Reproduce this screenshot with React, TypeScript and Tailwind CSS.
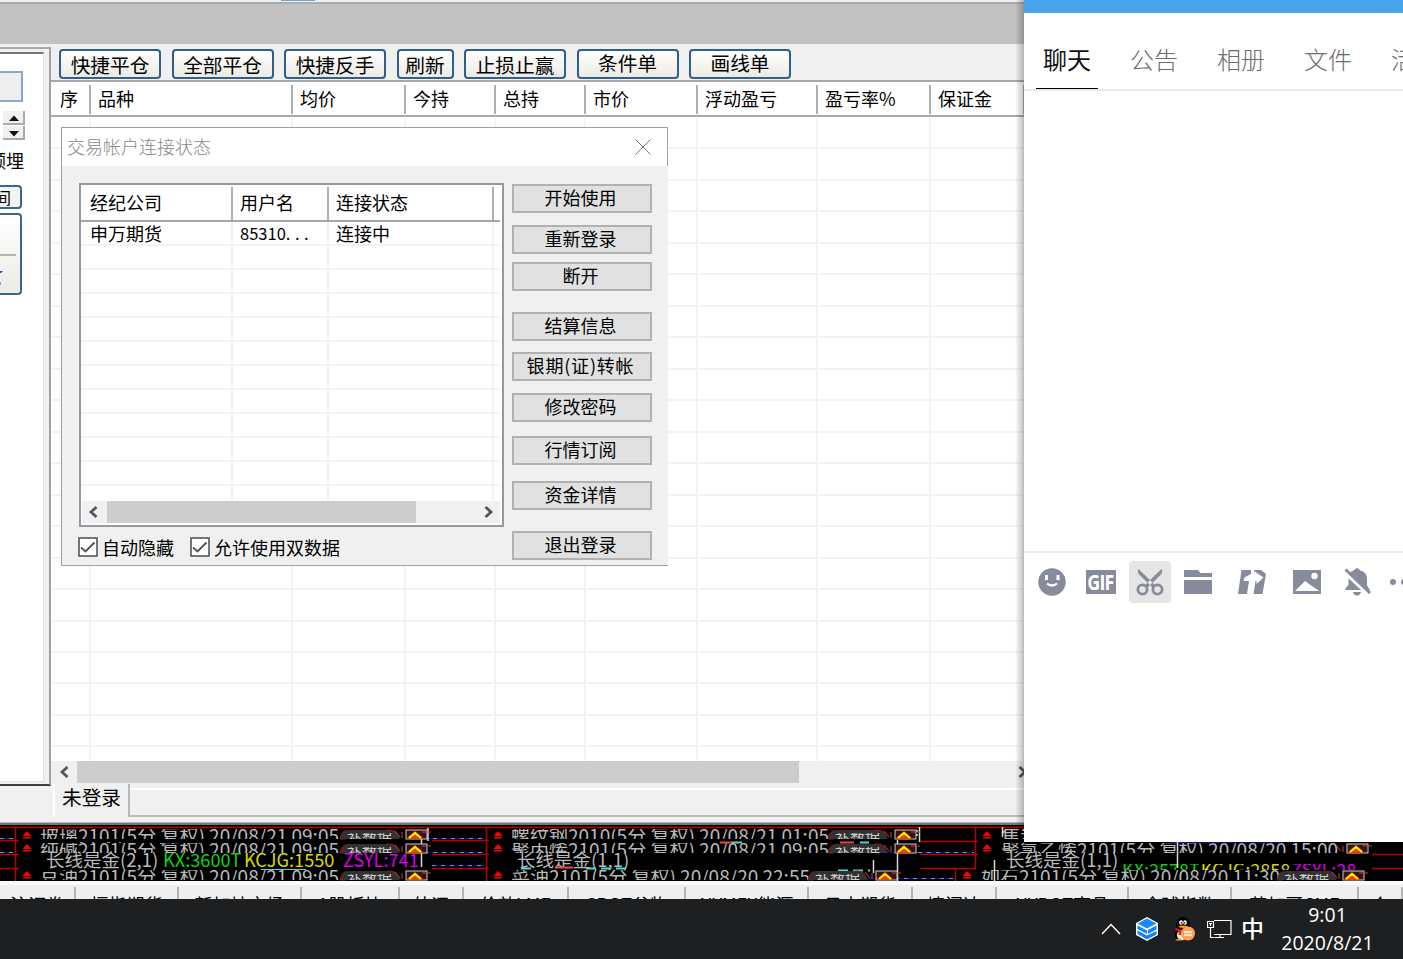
import clsx from 'clsx';

/** Futures trading client with the account dialog, a docked chat window and the system taskbar. */

const TOOLBAR = [
  { label: '快捷平仓' },
  { label: '全部平仓' },
  { label: '快捷反手' },
  { label: '刷新', narrow: true },
  { label: '止损止赢' },
  { label: '条件单', raised: true },
  { label: '画线单', raised: true },
];

const COLUMNS = [
  { label: '序', width: 'w-[40px]' },
  { label: '品种', width: 'w-[202px]' },
  { label: '均价', width: 'w-[113px]' },
  { label: '今持', width: 'w-[90px]' },
  { label: '总持', width: 'w-[90px]' },
  { label: '市价', width: 'w-[112px]' },
  { label: '浮动盈亏', width: 'w-[120px]' },
  { label: '盈亏率%', width: 'w-[113px]' },
  { label: '保证金', width: 'w-[94px]' },
];

const LIST_COLUMNS = [
  { label: '经纪公司', value: '申万期货', width: 'w-[152px]' },
  { label: '用户名', value: '85310...', width: 'w-[96px]' },
  { label: '连接状态', value: '连接中', width: 'w-[165px]' },
];

const ACTIONS = [
  { label: '开始使用', margin: 'mt-[17.500px]' },
  { label: '重新登录', margin: 'mt-3' },
  { label: '断开', margin: 'mt-[8.500px]' },
  { label: '结算信息', margin: 'mt-[20.500px]' },
  { label: '银期(证)转帐', margin: 'mt-[11.500px]' },
  { label: '修改密码', margin: 'mt-[11.500px]' },
  { label: '行情订阅', margin: 'mt-[14.500px]' },
  { label: '资金详情', margin: 'mt-4' },
  { label: '退出登录', margin: 'mt-[20.500px]' },
];

const MARKETS = [
  { label: '沪证券', width: 'w-[76px]' },
  { label: '恒指期货', width: 'w-[103px]' },
  { label: '新加坡市场', width: 'w-[123px]' },
  { label: 'A股板块', width: 'w-[98px]' },
  { label: '外汇', width: 'w-[64px]' },
  { label: '伦敦LME', width: 'w-[105px]' },
  { label: 'CBOT谷物', width: 'w-[117px]' },
  { label: 'NYMEX能源', width: 'w-[123px]' },
  { label: '日本期货', width: 'w-[104px]' },
  { label: '情阅达', width: 'w-[84px]' },
  { label: 'NYBOT商品', width: 'w-[132px]' },
  { label: '全球指数', width: 'w-[103px]' },
  { label: '芝加哥CME', width: 'w-[127px]' },
  { label: '合', width: 'w-[44px]' },
];

function Chevron({ dir }: { dir: 'left' | 'right' }) {
  return (
    <svg width="10" height="12" viewBox="0 0 10 12" className={clsx('shrink-0', dir === 'right' && 'rotate-180')}>
      <path d="M8.500 1 3 6l5.500 5" fill="none" stroke="#555" strokeWidth="2.800" />
    </svg>
  );
}

function SidePanel() {
  return (
    <div className="flex h-[739px] w-[51px] shrink-0 flex-col border-t-2 border-r-2 border-b-2 border-t-[#a8a8a8] border-r-[#a0a0a0] border-b-[#3c3c3c] bg-[#f0f0f0]">
      <div className="mt-[3px] mr-[5px] mb-[2px] flex flex-1 flex-col items-start overflow-hidden border-t-2 border-r border-b border-t-[#777] border-r-[#dedede] border-b-[#dedede] bg-white">
        <div className="mt-[17px] h-[31px] w-[23px] border-2 border-l-0 border-[#88a9c8] bg-[#efefef]" />
        <div className="mt-[9px] ml-[3px] flex flex-col gap-[1px]">
          {['M11 4.500l5 5.500H6z', 'M11 10.500l5-5.500H6z'].map((d) => (
            <div key={d} className="h-[14px] w-[22px] border-r-2 border-b-2 border-[#aaa] bg-[#f0f0f0]">
              <svg width="20" height="12" viewBox="0 0 20 12">
                <path d={d} fill="#111" />
              </svg>
            </div>
          ))}
        </div>
        <div className="mt-[9px] -ml-[12px] h-[22px] text-lg leading-[22px] whitespace-nowrap">顾埋</div>
        <div className="mt-[14px] flex h-[24px] w-[22px] items-center overflow-hidden rounded-r border-2 border-l-0 border-[#39658f] bg-[#f4f4f2] text-base leading-none">
          <span className="-ml-[5px]">间</span>
        </div>
        <div className="mt-[4px] h-[82px] w-[22px] rounded-r border-2 border-l-0 border-[#39658f] bg-linear-to-b from-white to-[#ecebe6]">
          <div className="mt-[39px] mr-[4px] h-[2px] bg-[#b5b5b5]" />
          <svg width="5" height="18" viewBox="0 0 5 18" className="mt-[14px]">
            <path d="M0 1h3L1 3H0z" fill="#2447e8" />
            <path d="M0 12h1v3H0z" fill="#61b5ef" />
          </svg>
        </div>
      </div>
    </div>
  );
}

function Positions() {
  return (
    <div className="flex w-[973px] flex-col overflow-hidden">
      <div className="flex h-9 shrink-0 gap-[10.500px] pt-[4.500px] pl-2 text-[19.700px]">
        {TOOLBAR.map((b) => (
          <div
            key={b.label}
            className={clsx(
              'flex h-[30px] shrink-0 justify-center rounded border-2 border-[#315f8b] bg-linear-to-b from-white to-[#eceae4] leading-[27px]',
              b.narrow ? 'w-[57px]' : 'w-[102px]',
            )}
          >
            <span className={clsx(b.raised && '-mt-[2px]')}>{b.label}</span>
          </div>
        ))}
      </div>
      <div className="flex h-[37px] shrink-0 border-t-2 border-b-2 border-[#a8a8a8] bg-white pt-[3px] pb-px text-lg leading-[27px]">
        {COLUMNS.map((c, i) => (
          <div
            key={c.label}
            className={clsx(
              'shrink-0 border-r-2 border-[#b0b0b0] whitespace-nowrap',
              c.width,
              i === 0 ? 'pl-[9px]' : 'pl-[7px]',
            )}
          >
            {c.label}
          </div>
        ))}
      </div>
      <div className="h-[644px] shrink-0 overflow-hidden bg-white pt-px">
        {Array.from({ length: 21 }, (_, i) => (
          <div key={i} className="flex h-[31.470px] border-b-2 border-[#f3f3f3]">
            {COLUMNS.map((c) => (
              <div key={c.label} className={clsx('shrink-0 border-r-2 border-[#f3f3f3]', c.width)} />
            ))}
          </div>
        ))}
      </div>
      <div className="flex h-[22px] shrink-0 items-center bg-[#f0f0f0] pl-[8px]">
        <Chevron dir="left" />
        <div className="ml-[8px] h-[22px] w-[722px] shrink-0 bg-[#cdcdcd]" />
        <div className="ml-[219px] shrink-0">
          <Chevron dir="right" />
        </div>
      </div>
      <div className="flex h-[39px] shrink-0 pt-px">
        <div className="ml-[2px] h-[33px] w-[77px] border-r-2 border-l-2 border-l-white border-r-[#b7b7b7] pl-[7px] text-[19.700px] leading-[26px]">
          未登录
        </div>
        <div className="mt-[4px] h-[29px] flex-1 border-t-2 border-b-2 border-t-white border-b-[#bcbcbc]" />
      </div>
    </div>
  );
}

function Dialog() {
  return (
    <div className="absolute top-[127px] left-[61px] h-[439px] w-[607px] border-t border-b border-l border-[#a0a0a0] bg-[#f0f0f0]">
      <div className="flex h-[38px] items-center justify-between border-r border-[#a0a0a0] bg-white pr-[16px] pl-[5px] text-lg font-light text-[#888]">
        <span className="-mt-[2px]">交易帐户连接状态</span>
        <svg width="16" height="16" viewBox="0 0 16 16">
          <path d="M.5.5l15 15M15.500.5l-15 15" stroke="#777" strokeWidth="1" />
        </svg>
      </div>
      <div className="flex">
        <div>
          <div className="mt-[17px] ml-[17px] flex h-[344px] w-[425px] flex-col border-2 border-[#9299a2] bg-white pt-[2px] pr-[2px] pb-[2px]">
            <div className="flex h-[35px] border-b-2 border-[#a6a6a6] text-lg leading-[30px]">
              {LIST_COLUMNS.map((c, i) => (
                <div
                  key={c.label}
                  className={clsx('border-r-2 border-[#b0b0b0]', c.width, i === 0 ? 'pl-[9px]' : 'pl-[7px]')}
                >
                  {c.label}
                </div>
              ))}
            </div>
            <div className="h-[279px] overflow-hidden text-lg leading-[23px]">
              {Array.from({ length: 12 }, (_, row) => (
                <div key={row} className="flex h-[24px] border-b-2 border-[#f3f3f3]">
                  {LIST_COLUMNS.map((c, i) => (
                    <div
                      key={c.label}
                      className={clsx(
                        'border-r-2 border-[#f3f3f3]',
                        c.width,
                        i === 0 ? 'pl-[9px]' : 'pl-[7px]',
                        i === 1 && 'text-[16.500px]',
                      )}
                    >
                      {row === 0 && (i === 1 ? <>85310<span className="tracking-[4.500px]">...</span></> : c.value)}
                    </div>
                  ))}
                </div>
              ))}
            </div>
            <div className="ml-px flex h-[22px] items-center bg-[#f0f0f0] pl-[6px]">
              <Chevron dir="left" />
              <div className="ml-[9px] h-full w-[309px] bg-[#cdcdcd]" />
              <div className="ml-[68px]">
                <Chevron dir="right" />
              </div>
            </div>
          </div>
          <div className="mt-[7px] ml-[16px] flex text-lg leading-[25px]">
            {['自动隐藏', '允许使用双数据'].map((label) => (
              <label key={label} className="mr-[16px] flex items-center gap-[4px]">
                <svg width="20" height="20" viewBox="0 0 20 20">
                  <rect x="1" y="1" width="18" height="18" fill="#fff" stroke="#4b4b4b" strokeWidth="1.500" />
                  <path d="M3 10.500l4.500 4L16.500 5.500" fill="none" stroke="#555" strokeWidth="2" />
                </svg>
                <span className="mt-px">{label}</span>
              </label>
            ))}
          </div>
        </div>
        <div className="ml-[8px] flex w-[140px] flex-col">
          {ACTIONS.map((a) => (
            <button
              key={a.label}
              className={clsx(
                'flex h-[29px] shrink-0 justify-center border-2 border-[#b1b1b1] bg-[#e1e1e1] pr-[3px] text-lg leading-[23px]',
                a.margin,
              )}
            >
              {a.label === '银期(证)转帐' ? <span className="tracking-[0.800px]">{a.label}</span> : a.label}
            </button>
          ))}
        </div>
      </div>
    </div>
  );
}

const QUOTES = [
  { text: '玻璃2101(5分 复权) 20/08/21 09:05', pos: 'left-[40px] top-[4px]' },
  { text: '纯碱2101(5分 复权) 20/08/21 09:05', pos: 'left-[40px] top-[18px]' },
  { text: '豆油2101(5分 复权) 20/08/21 09:05', pos: 'left-[40px] top-[45px]' },
  { text: '螺纹钢2010(5分 复权) 20/08/21 01:05', pos: 'left-[511px] top-[4px]' },
  { text: '聚丙烯2101(5分 复权) 20/08/21 09:05', pos: 'left-[511px] top-[18px]' },
  { text: '菜油2101(5分 复权) 20/08/20 22:55', pos: 'left-[511px] top-[45px]' },
  { text: '焦炭2101(5分 复权) 20/08/21 09:05', pos: 'left-[1001px] top-[4px]' },
  { text: '聚氯乙烯2101(5分 复权) 20/08/20 15:00', pos: 'left-[1001px] top-[18px]' },
  { text: '如石2101(5分 复权) 20/08/20 11:30', pos: 'left-[981px] top-[45px]' },
];

const FLAGS = [
  [415, 4], [415, 18], [415, 45], [904, 4], [904, 18], [885, 45], [1356, 18], [1352, 45],
];

const MARKS = [
  [27, 8], [27, 21], [27, 48], [498, 8], [498, 21], [498, 48], [987, 8], [987, 21], [967, 48],
];

const PILLS = [
  [340, 4], [340, 18], [340, 45], [828, 4], [828, 18], [808, 45], [1277, 45],
];

function QuoteStrip() {
  return (
    <div className="relative h-[56px] shrink-0 overflow-hidden bg-black text-[19px] leading-[19px] whitespace-nowrap text-[#b9b9b9]">
      {QUOTES.map((q) => (
        <div key={q.text} className={clsx('absolute h-[10px] overflow-hidden', q.pos)}>
          <div className="-mt-[4px]">{q.text}</div>
        </div>
      ))}
      <span className="absolute top-[25px] left-[46px] text-[18.500px]">长线是金(2,1)</span>
      <span className="absolute top-[25px] left-[163px] text-[18.200px] text-[#12cf12]">KX:3600T</span>
      <span className="absolute top-[25px] left-[244px] text-[18.200px] text-[#d8d800]">KCJG:1550</span>
      <span className="absolute top-[25px] left-[343px] text-[18.200px] text-[#dc00e6]">ZSYL:741</span>
      <span className="absolute top-[25px] left-[517px] text-[18.500px]">长线是金(1,1)</span>
      <span className="absolute top-[25px] left-[1006px] text-[18.500px]">长线是金(1,1)</span>
      <div className="absolute top-[39px] left-[1122px] flex h-[6px] gap-px overflow-hidden text-[18px]">
        <span className="-mt-[4px] text-[#12cf12]">KX:2578T</span>
        <span className="-mt-[4px] text-[#d8d800]">KCJG:2858</span>
        <span className="-mt-[4px] text-[#dc00e6]">ZSYL:28</span>
      </div>
      <svg width="1403" height="56" className="absolute top-0 left-0">
        <g stroke="#b90000" strokeWidth="1.500">
          <path d="M0 2.500h1024M15.500 2v54M0 15.500h19M0 29.500h19M0 43.500h19" />
          <path d="M486.500 2v54M432 15.500h57M432 29.500h57M432 43.500h57" fill="none" />
          <path d="M975.500 3v40.500M920 16.500h58M920 29.500h58M920 43.500h56M955.500 44v12M1372 29.500h31M1372 43.500h31" fill="none" />
        </g>
        <path d="M0 13.500h14M0 27.500h14M424 13.500h61M424 27.500h61M432 40.500h53M870 27.500h104M860 53.500h95M1170 17.500h112" stroke="#10107c" strokeWidth="1.500" />
        <path d="M0 13.500h14M0 27.500h14M424 13.500h61M424 27.500h61M432 40.500h53M900 27.500h74M895 53.500h60" stroke="#8888a8" strokeDasharray="4 5" />
        <path d="M80 17.500h52m28 1h75" stroke="#4ca6a6" strokeDasharray="3 9 2 13" />
        <g stroke="#4dd" strokeWidth="2">
          <path d="M521 43.500h12M586 43.500h42M732 17.500h10M860 17.500h9M838 45.500h32" strokeDasharray="10 5" />
          <path d="M555 42.500h18M720 17.500h12M840 17.500h14" stroke="#e44" />
          <path d="M261 44.500h45" strokeWidth="1" />
          <path d="M906 6h12M906 10h12" />
        </g>
        <path d="M421.500 14v28M428 3v13M897.500 15v41M873.500 35v13M919.500 2v15M994.500 35v21M1177.500 17v26M1002.500 2v10" stroke="#d7d7d7" strokeWidth="1.500" />
        {MARKS.map(([x, y]) => (
          <g key={`${x}-${y}`} fill="#f00">
            <path d={`M${x} ${y - 2}l4.500 5h-9z`} />
            <rect x={x - 4} y={y + 4} width="8" height="1.500" />
          </g>
        ))}
        {PILLS.map(([x, y]) => (
          <path
            key={`${x}-${y}`}
            d={`M${x} ${y + 10}q2-9 8-9h42q7 0 10 9z`}
            fill="#323232"
            stroke="#9a1515"
            strokeDasharray="10 42 12 60"
          />
        ))}
        {FLAGS.map(([x, y]) => (
          <g key={`${x}-${y}`}>
            <rect x={x - 9} y={y + 1} width="21" height="9" fill="#381212" stroke="#ccc" />
            <path d={`M${x + 7} ${y + 3}h9M${x - 20} ${y + 2}l5 6M${x - 13} ${y + 9}v-6`} stroke="#c44" />
            <path d={`M${x - 9} ${y + 10}l9-8 9 8z`} fill="#f33b00" />
            <path d={`M${x - 6} ${y + 9}l6-5 6 5`} fill="none" stroke="#ff0" strokeWidth="2" />
          </g>
        ))}
      </svg>
      {PILLS.map(([x, y]) => (
        <div
          key={`${x}-${y}`}
          className="absolute h-[6px] overflow-hidden text-[15px] leading-[15px] text-[#ccc]"
          style={{ left: x + 7, top: y + 4 }}
        >
          <div className="-mt-[3px]">补数据</div>
        </div>
      ))}
    </div>
  );
}

function MarketTabs() {
  return (
    <div className="flex h-[18px] shrink-0 overflow-hidden border-t-4 border-[#fafafa] bg-[#efefef] pt-[2px] text-[18px] leading-[24px]">
      {MARKETS.map((m) => (
        <div key={m.label} className={clsx('shrink-0 border-r-2 border-[#b4b4b4] text-center whitespace-nowrap', m.width)}>
          <div className="mt-[5px]">{m.label}</div>
        </div>
      ))}
    </div>
  );
}

const CHAT_TABS = ['公告', '相册', '文件', '活动'];

function ChatWindow() {
  return (
    <div className="absolute top-0 left-[1024px] flex h-[842px] w-[379px] flex-col overflow-hidden bg-white">
      <div className="h-[13px] shrink-0 bg-[#4aa4ec]" />
      <div className="flex h-[78px] shrink-0 gap-[25px] border-b-2 border-[#ebebeb] pl-[12px] text-2xl">
        <div className="flex h-[76px] w-[62px] shrink-0 items-center justify-center border-b border-black pt-[16px] text-[#111]">
          聊天
        </div>
        {CHAT_TABS.map((tab) => (
          <div key={tab} className="flex h-[76px] w-[62px] shrink-0 items-center justify-center pt-[15px] font-light text-[#6c6c6c]">
            {tab}
          </div>
        ))}
      </div>
      <div className="h-[460px] shrink-0" />
      <div className="flex shrink-0 items-center border-t-2 border-[#ebebeb] pt-[8px] pl-[14px] text-[#888b9b]">
        <svg width="28" height="28" viewBox="0 0 28 28" className="shrink-0">
          <circle cx="14" cy="14" r="13.700" fill="currentColor" />
          <path d="M8.500 7v5M20 7v5" stroke="#fff" strokeWidth="3" />
          <path d="M9 15.500q5 4 10 0" fill="none" stroke="#fff" strokeWidth="2.200" />
        </svg>
        <div className="ml-[20px] flex h-[24px] w-[30px] shrink-0 items-center justify-center bg-current">
          <span className="mr-[2px] scale-x-85 font-['Open_Sans'] text-[21px] leading-none font-bold tracking-[-1px] text-white">
            GIF
          </span>
        </div>
        <div className="ml-[13px] flex size-[42px] shrink-0 items-center justify-center rounded-sm bg-[#e5e5e5]">
          <svg width="28" height="28" viewBox="0 0 28 28" className="shrink-0">
            <path d="M2.500 1 16 14l3.500 4-3 1.500L4 7.500Q.5 4 2.500 1zM25.500 1 12 14l-3.500 4 3 1.500L24 7.500q3.500-3.500 1.500-6.500z" fill="currentColor" />
            <circle cx="6.500" cy="21.500" r="4.600" fill="none" stroke="currentColor" strokeWidth="2.800" />
            <circle cx="21.500" cy="21.500" r="4.600" fill="none" stroke="currentColor" strokeWidth="2.800" />
            <circle cx="14" cy="14" r="1" fill="#e5e5e5" />
          </svg>
        </div>
        <svg width="28" height="24" viewBox="0 0 28 24" fill="currentColor" className="ml-[13px] shrink-0">
          <path d="M0 0h14l2.500 3H28v4H0zM0 10h28v14H0z" />
        </svg>
        {/* share arrow cut out of two slanted sheets */}
        <svg width="28" height="24" viewBox="0 0 28 24" fill="currentColor" className="ml-[26px] shrink-0">
          <path d="M3.500 0H13v4l-6.500 3.500L5.500 11H11L9 24H0z" />
          <path d="M16 0h7l5 4-3.500 20h-9L17.500 11h1v3l7-6.500L16 1z" />
        </svg>
        <svg width="28" height="24" viewBox="0 0 28 24" className="ml-[27px] shrink-0">
          <path d="M0 0h28v24H0z" fill="currentColor" />
          <path d="M2 21 12 11l5.500 4 9 6z" fill="#fff" />
          <circle cx="21.500" cy="6" r="3.200" fill="#fff" />
        </svg>
        <svg width="28" height="28" viewBox="0 0 28 28" fill="currentColor" className="ml-[23px] shrink-0">
          <path d="M1.500 22v-2l3-3v-7q0-6 5-7.500Q11 .5 13 0q2 .5 3.500 2.500 6 1.500 6.500 8v7l3 4.500zM9 24h8q-1 3.500-4 3.500T9 24z" />
          <path d="M0 4l24 22" stroke="#fff" strokeWidth="3.500" />
          <path d="M1.500 1.500l24.500 23.500" stroke="currentColor" strokeWidth="3" />
        </svg>
        <svg width="30" height="6" viewBox="0 0 30 6" fill="currentColor" className="ml-[18px] shrink-0">
          <circle cx="3" cy="3" r="3" />
          <circle cx="14" cy="3" r="3" />
          <circle cx="25" cy="3" r="3" />
        </svg>
      </div>
    </div>
  );
}

function Taskbar() {
  return (
    <div className="flex h-[60px] shrink-0 items-center bg-[#1e1f20] pl-[1101px] text-white">
      <svg width="20" height="12" viewBox="0 0 20 12" className="shrink-0">
        <path d="M1 11l9-9.500 9 9.500" fill="none" stroke="#fff" strokeWidth="1.400" />
      </svg>
      <svg width="22" height="24" viewBox="0 0 22 24" className="ml-[15px] shrink-0">
        <path d="M11 0l11 6v12l-11 6L0 18V6z" fill="#fff" />
        <path d="M11 1.500 20.500 6.500 11 11.500 1.500 6.500z" fill="#188cff" />
        <path d="M1.500 8.500 11 13.500v3.500l-9.500-5z" fill="#1283f5" />
        <path d="M1.500 13.500 11 18.500v4L1.500 17z" fill="#1283f5" />
        <path d="M20.500 8.500 12 13v4l8.500-4.500zM20.500 14 11 18.500v4l9.500-5z" fill="#1283f5" />
      </svg>
      <svg width="24" height="24" viewBox="0 0 24 24" className="ml-[15px] shrink-0">
        <path d="M3 11h13l2 9-5 3H4l-2-4z" fill="#050505" />
        <ellipse cx="10" cy="8" rx="7" ry="8" fill="#050505" />
        <ellipse cx="9.500" cy="18" rx="5.500" ry="5" fill="#fff" />
        <ellipse cx="8" cy="5.500" rx="1.800" ry="2.300" fill="#fff" />
        <ellipse cx="12" cy="5.500" rx="1.800" ry="2.300" fill="#fff" />
        <circle cx="8.400" cy="5.800" r=".8" />
        <circle cx="11.600" cy="5.800" r=".8" />
        <path d="M5 9.500q5-2 10 0-5 3-10 0z" fill="#f90" />
        <path d="M3 11q7 4 14 0l1 3q-5 1-9 .5V18H5.500v-4L2 13z" fill="#ed1c2e" />
        <path d="M2 23.500q4-4 8 0z" fill="#f90" />
        <circle cx="15" cy="16.500" r="7" fill="#ffa24f" />
        <path d="M11 15h8M11 18h8" stroke="#fff" strokeWidth="1.400" />
      </svg>
      <svg width="25" height="20" viewBox="0 0 25 20" fill="none" stroke="#fff" strokeWidth="1.200" className="ml-[10px] shrink-0">
        <path d="M7 1.500h17v14H7M3.500 9v9.500h4M13 15.500v3M8 18.500h9M.5 2.500h6v6h-6zM3.500 7V4.500M2 4.500h3" />
      </svg>
      <span className="-mt-[4px] ml-[9px] w-[23px] text-[23px] leading-none font-medium">中</span>
      <div className="ml-[4px] w-[119px] text-center font-['Open_Sans'] text-[19.500px] leading-7">
        <div>9:01</div>
        <div>2020/8/21</div>
      </div>
    </div>
  );
}

export default function App() {
  return (
    <div className="relative flex h-[959px] w-[1403px] flex-col overflow-hidden bg-[#f0f0f0] font-['Noto_Sans_CJK_SC',sans-serif] text-black">
      <div className="flex h-[44px] shrink-0 flex-col bg-[#f0f0f0]">
        <div className="flex h-[2px]">
          <div className="ml-[281px] h-px w-[34px] bg-[#70a5d4]" />
        </div>
        <div className="flex-1 border-t-2 border-[#acacac] bg-[#c2c2c2]" />
      </div>
      <div className="flex h-[778px] shrink-0">
        <div className="w-[51px] shrink-0 pt-[3px]">
          <SidePanel />
        </div>
        <Positions />
      </div>
      <div className="h-[3px] shrink-0 border-b-2 border-[#767676] bg-[#b5b5b5]" />
      <QuoteStrip />
      <MarketTabs />
      <Taskbar />
      <Dialog />
      <div className="absolute top-0 left-[1015px] h-[828px] w-[9px] bg-linear-to-r from-transparent to-black/25" />
      <ChatWindow />
    </div>
  );
}
